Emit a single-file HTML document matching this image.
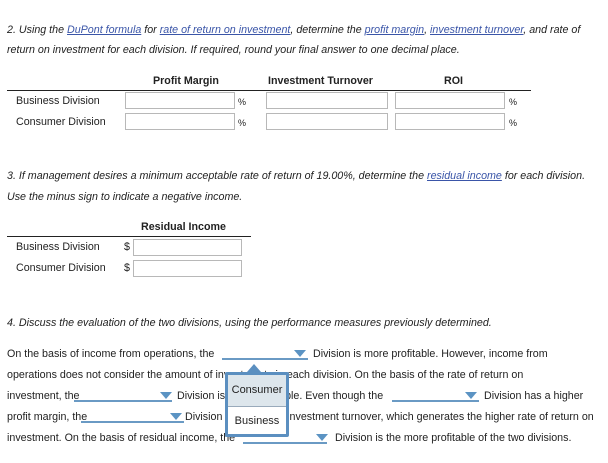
<!DOCTYPE html>
<html><head><meta charset="utf-8"><style>
body{margin:0;width:608px;height:463px;background:#fff;font-family:"Liberation Sans",Arial,sans-serif;font-size:10.7px;color:#222;position:relative;overflow:hidden}
.a{position:absolute;white-space:nowrap;line-height:12px}
.i{font-style:italic}
a{color:#3a55a8;text-decoration:underline}
.b{font-weight:bold}
.in{position:absolute;border:1px solid #b8b8b8;background:#fff;box-sizing:border-box;height:17px}
.hl{position:absolute;height:1px;background:#222}
.dd{position:absolute;height:2px;background:#6a9ac4}
.tri{position:absolute;width:0;height:0;border-left:6px solid transparent;border-right:6px solid transparent;border-top:7px solid #5b93c3}
</style></head><body>
<div class="a i" style="left:7px;top:24px">2. Using the <a>DuPont formula</a> for <a>rate of return on investment</a>, determine the <a>profit margin</a>, <a>investment turnover</a>, and rate of</div>
<div class="a i" style="left:7px;top:44px">return on investment for each division. If required, round your final answer to one decimal place.</div>
<div class="a b" style="left:153px;top:75px">Profit Margin</div>
<div class="a b" style="left:268px;top:75px">Investment Turnover</div>
<div class="a b" style="left:444px;top:75px">ROI</div>
<div class="hl" style="left:7px;top:90px;width:524px"></div>
<div class="a" style="left:16px;top:95px">Business Division</div>
<div class="a" style="left:16px;top:116px">Consumer Division</div>
<div class="in" style="left:125px;top:92px;width:110px"></div>
<div class="in" style="left:125px;top:113px;width:110px"></div>
<div class="a" style="left:238px;top:96px;font-size:9px">%</div>
<div class="a" style="left:238px;top:117px;font-size:9px">%</div>
<div class="in" style="left:266px;top:92px;width:122px"></div>
<div class="in" style="left:266px;top:113px;width:122px"></div>
<div class="in" style="left:395px;top:92px;width:110px"></div>
<div class="in" style="left:395px;top:113px;width:110px"></div>
<div class="a" style="left:509px;top:96px;font-size:9px">%</div>
<div class="a" style="left:509px;top:117px;font-size:9px">%</div>

<div class="a i" style="left:7px;top:170px">3. If management desires a minimum acceptable rate of return of 19.00%, determine the <a>residual income</a> for each division.</div>
<div class="a i" style="left:7px;top:191px">Use the minus sign to indicate a negative income.</div>
<div class="a b" style="left:141px;top:221px">Residual Income</div>
<div class="hl" style="left:7px;top:236px;width:244px"></div>
<div class="a" style="left:16px;top:241px">Business Division</div>
<div class="a" style="left:16px;top:262px">Consumer Division</div>
<div class="a" style="left:124px;top:241px">$</div>
<div class="a" style="left:124px;top:262px">$</div>
<div class="in" style="left:133px;top:239px;width:109px"></div>
<div class="in" style="left:133px;top:260px;width:109px"></div>

<div class="a i" style="left:7px;top:317px">4. Discuss the evaluation of the two divisions, using the performance measures previously determined.</div>

<div class="a" style="left:7px;top:348px">On the basis of income from operations, the</div>
<div class="dd" style="left:222px;top:358px;width:86px"></div><div class="tri" style="left:294px;top:350px"></div>
<div class="a" style="left:313px;top:348px">Division is more profitable. However, income from</div>
<div class="a" style="left:7px;top:369px">operations does not consider the amount of investments in each division. On the basis of the rate of return on</div>
<div class="a" style="left:7px;top:390px">investment, the</div>
<div class="dd" style="left:74px;top:400px;width:98px"></div><div class="tri" style="left:160px;top:392px"></div>
<div class="a" style="left:177px;top:390px">Division is more profitable. Even though the</div>
<div class="dd" style="left:392px;top:400px;width:87px"></div><div class="tri" style="left:465px;top:392px"></div>
<div class="a" style="left:484px;top:390px">Division has a higher</div>
<div class="a" style="left:7px;top:411px">profit margin, the</div>
<div class="dd" style="left:81px;top:421px;width:103px"></div><div class="tri" style="left:170px;top:413px"></div>
<div class="a" style="left:185px;top:411px">Division has a higher investment turnover, which generates the higher rate of return on</div>
<div class="a" style="left:7px;top:432px">investment. On the basis of residual income, the</div>
<div class="dd" style="left:243px;top:442px;width:84px"></div><div class="tri" style="left:316px;top:434px"></div>
<div class="a" style="left:335px;top:432px">Division is the more profitable of the two divisions.</div>

<div style="position:absolute;left:247px;top:364px;width:0;height:0;border-left:7px solid transparent;border-right:7px solid transparent;border-bottom:8px solid #5b8fc0"></div>
<div style="position:absolute;left:225px;top:372px;width:64px;height:65px;box-sizing:border-box;border:3px solid #5b8fc0;background:#fff;border-radius:2px">
<div style="height:31px;background:#dde6ec;border-bottom:1px solid #9ab;text-align:center;line-height:31px;font-size:11px">Consumer</div>
<div style="text-align:center;line-height:28px;font-size:11px">Business</div>
</div>
</body></html>
